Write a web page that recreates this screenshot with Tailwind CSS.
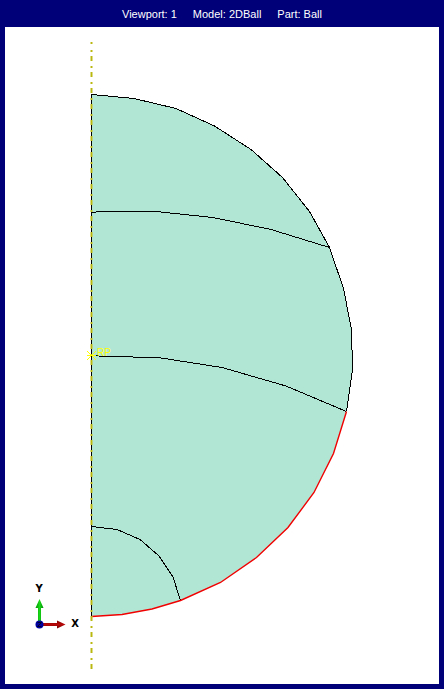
<!DOCTYPE html>
<html lang="en">
<head>
<meta charset="utf-8">
<meta name="viewport" content="width=device-width, initial-scale=1">
<title>Viewport: 1</title>
<script src="https://cdn.jsdelivr.net/npm/@tailwindcss/browser@4"></script>
</head>
<body class="flex min-h-screen flex-col bg-[#000078] px-[5px] pb-[5px] font-['Liberation_Sans',sans-serif]">
<header class="flex h-[27px] shrink-0 items-center justify-center gap-4 text-[11px] leading-4 whitespace-nowrap text-white">
  <span>Viewport: 1</span>
  <span>Model: 2DBall</span>
  <span>Part: Ball</span>
</header>
<main class="flex flex-1 flex-col bg-white">
  <svg class="w-full flex-1" viewBox="5 27 434 657" role="img" aria-label="Part Ball, half section">
    <defs>
      <linearGradient id="green" x1="0" x2="1"><stop offset="0" stop-color="#009000"/><stop offset=".5" stop-color="#18d818"/><stop offset="1" stop-color="#008c00"/></linearGradient>
      <linearGradient id="red" x1="0" x2="0" y1="0" y2="1"><stop offset="0" stop-color="#800000"/><stop offset=".5" stop-color="#b80808"/><stop offset="1" stop-color="#700000"/></linearGradient>
    </defs>
    <!-- section faces -->
    <path fill="#b2e6d4" d="M91.5 94.5 134 98.5 176 108.5 214.500 126 251 149.5 282.5 177.5 309.5 211.5 329.5 247.5 343.5 288.5 351.5 329.5 352.5 369.5 346.5 411.5 333.5 453.5 314 492.5 288 527.5 256.5 557.5 220.5 582.5 180.5 600.5 152 609 122 614.5 91.5 616.5Z"/>
    <!-- edges and partitions -->
    <g fill="none" stroke="#000" stroke-width="1" shape-rendering="crispEdges">
      <path d="M91.5 616.5V94.5L134 98.5 176 108.5 214.500 126 251 149.5 282.5 177.5 309.5 211.5 329.5 247.5 343.5 288.5 351.5 329.5 352.5 369.5 346.5 411.5"/>
      <path d="M91.5 212.5 100 211.5H156L213 217.5 271 229.5 329.5 247.5"/>
      <path d="M91.5 355.5 107 356.5 158 357.5 222 367.5 286 386 346.5 411.5"/>
      <path d="M91.5 526.5 117 529.5 140 539.5 159 556 173 577 180.5 600.5"/>
    </g>
    <path fill="none" stroke="#f00000" stroke-width="1.4" d="M346.5 411.5 333.5 453.5 314 492.5 288 527.5 256.5 557.5 220.5 582.5 180.5 600.5 152 609 122 614.5 91.5 616.5"/>
    <!-- axis of revolution -->
    <g fill="none">
      <path stroke="#c4c43c" stroke-opacity=".6" stroke-width="3" stroke-dasharray="2 4 5 5" d="M91.5 50V669"/>
      <path stroke="#b8b810" stroke-width="1" stroke-dasharray="2 4 5 5" d="M91.5 50V669"/>
      <path stroke="#c4c43c" stroke-opacity=".6" stroke-width="3" d="M91.5 42v2"/>
      <path stroke="#b8b810" d="M91.5 42v2"/>
    </g>
    <!-- reference point -->
    <path fill="none" stroke="#ff0" d="M87 351l9 9M87 360l9-9M87 355.5h9"/>
    <text x="97" y="356" font-size="10" fill="#ff0">RP</text>
    <!-- view triad -->
    <path fill="url(#green)" d="M38 624V608h-2.500L39.500 599 43.500 608H41V624Z"/>
    <path fill="url(#red)" d="M41 623H57V620.500L65.500 624.500 57 628.500V626H41Z"/>
    <circle cx="39.500" cy="624.500" r="4" fill="#0000a0"/>
    <path fill="none" stroke="#000030" d="M37.500 622.500h4l-4 4h4"/>
    <g class="font-['DejaVu_Sans',sans-serif] font-bold" font-size="10" text-anchor="middle">
      <text x="39" y="592">Y</text>
      <text x="75" y="627">X</text>
    </g>
  </svg>
</main>
</body>
</html>
